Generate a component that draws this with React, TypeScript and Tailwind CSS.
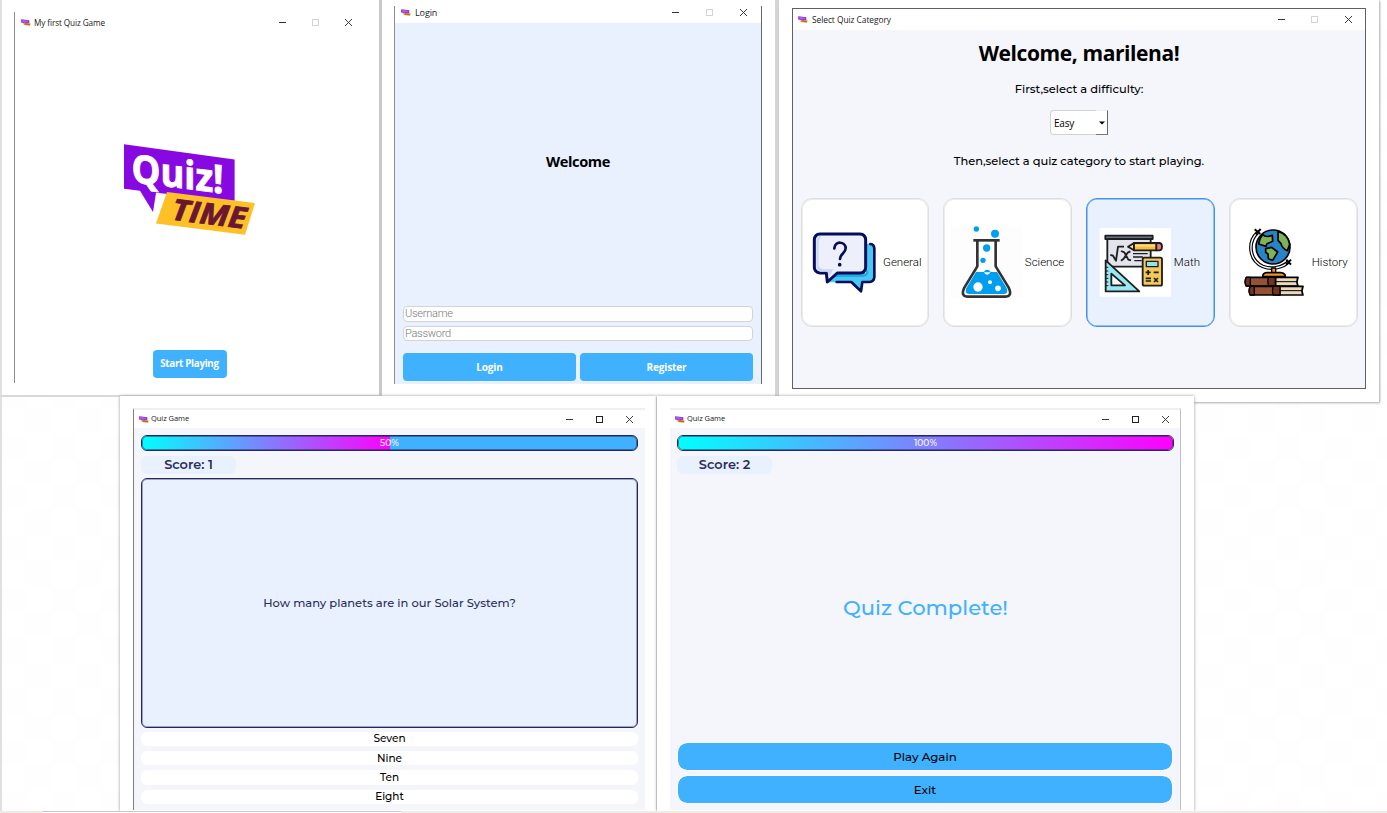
import type { ReactNode } from "react";

const UI = "font-['Open_Sans','Noto_Sans',sans-serif]";
const GEO = "font-['Montserrat',Inter,sans-serif]";

function MiniLogo() {
  return (
    <svg viewBox="122 142 136 96" className="h-[7px] w-[10px] shrink-0">
      <path d="M124 144L235 159V201L156 193L153 212L140 191L124 189Z" fill="#8a20dc" />
      <path d="M136 160L222 172M140 174L222 186" stroke="#d9b3f5" strokeWidth="6" />
      <path d="M167 192L255 203L245 235L156 223Z" fill="#d8922a" />
      <path d="M176 208L240 217" stroke="#8c3a2c" strokeWidth="9" />
    </svg>
  );
}

function Logo() {
  return (
    <svg viewBox="122 142 136 96" className="h-24 w-[136px]">
      <path d="M124 144.3L234.6 159.5V201L156 192.8L153 212L140 190.8L124 188.8Z" fill="#8708e0" />
      <path d="M167 192L255 203L245 234.7L156 223.5Z" fill="#fdc027" />
      <text
        transform="matrix(.92 .115 0 1 131.5 182)"
        fontFamily="Open Sans, Noto Sans, sans-serif"
        fontWeight="700"
        fontSize="39"
        textLength="100"
        lengthAdjust="spacingAndGlyphs"
        fill="#fff"
        stroke="#fff"
        strokeWidth=".9"
      >
        Quiz!
      </text>
      <text
        transform="matrix(1 .125 -.13 1 171 219.5)"
        fontFamily="Open Sans, Noto Sans, sans-serif"
        fontWeight="700"
        fontStyle="italic"
        fontSize="29"
        textLength="74"
        lengthAdjust="spacingAndGlyphs"
        fill="#6b1733"
        stroke="#6b1733"
        strokeWidth=".8"
      >
        TIME
      </text>
    </svg>
  );
}

function Control({ cell, children }: { cell: string; children: ReactNode }) {
  return (
    <span className={`flex justify-center ${cell}`}>
      <svg width="9" height="9" viewBox="0 0 9 9" fill="none">
        {children}
      </svg>
    </span>
  );
}

function TitleBar({
  title,
  height,
  cell,
  text,
  maximizable = false,
}: {
  title: string;
  height: string;
  cell: string;
  text: string;
  maximizable?: boolean;
}) {
  return (
    <div className={`flex shrink-0 items-center bg-white ${height}`}>
      <MiniLogo />
      <span className={`flex-1 whitespace-nowrap text-[#222] ${UI} ${text}`}>{title}</span>
      <Control cell={cell}>
        <path d="M1 4.5H8" stroke="#333" />
      </Control>
      <Control cell={cell}>
        <rect x="1.5" y="1.5" width="6" height="6" stroke={maximizable ? "#222" : "#d4d4d4"} />
      </Control>
      <Control cell={cell}>
        <path d="M1 1L8 8M8 1L1 8" stroke="#333" strokeWidth=".95" />
      </Control>
    </div>
  );
}

function GeneralIcon() {
  return (
    <svg viewBox="54 123 216 216" className="size-[72px] shrink-0" strokeLinejoin="round" strokeLinecap="round">
      <path d="M105 292H183L212 319L216 292H240Q254 291 254 276V190Q253 177 238 176H228V264H140L108 292Z" fill="#45caf2" />
      <path d="M140 266H228V250L236 262Q234 276 215 276H126Z" fill="#26a9e0" />
      <path d="M241 177Q253 178 253 192V276Q252 290 238 291H217L213 319L184 291H140" fill="none" stroke="#070c5c" strokeWidth="8" />
      <path d="M90 147H210Q226 148 227 164V247Q226 263 210 264H142L112 291L109 264H90Q74 262 73 247V164Q74 148 90 147Z" fill="#edf0fa" stroke="#070c5c" strokeWidth="9" />
      <path d="M79 166Q80 153 94 152L86 170V240Q88 252 104 253H130L116 277L113 260H92Q80 259 79 246Z" fill="#cbd9f2" />
      <path d="M133 190C134 166 167 169 167 190C167 205 150 206 150 222" fill="none" stroke="#070c5c" strokeWidth="8" />
      <circle cx="149" cy="239" r="5.5" fill="#070c5c" />
    </svg>
  );
}

function ScienceIcon() {
  return (
    <svg viewBox="480 123 216 216" className="size-[72px] shrink-0">
      <rect x="484" y="128" width="211" height="211" fill="#fdfdfd" />
      <path d="M562 168V244L523 308Q511 333 532 335H647Q668 333 656 308L617 244V168" fill="#fff" stroke="#333" strokeWidth="8" strokeLinejoin="round" />
      <path d="M550 166H629" stroke="#333" strokeWidth="8" />
      <path d="M558 261H582Q591 253 601 261H621L650 309Q657 326 642 327H537Q522 326 529 309Z" fill="#009eef" />
      <g fill="#009eef">
        <circle cx="559" cy="132" r="8" />
        <circle cx="615" cy="146" r="12" />
        <circle cx="590" cy="189" r="11" />
        <circle cx="579" cy="226" r="8" />
        <path d="M582 261A10 10 0 0 1 601 261Z" />
      </g>
      <g fill="#fff">
        <path d="M582 262A10 10 0 0 0 601 262Z" />
        <circle cx="564" cy="306" r="14" />
        <circle cx="600" cy="292" r="6" />
        <circle cx="624" cy="310" r="8.5" />
      </g>
    </svg>
  );
}

function MathIcon() {
  return (
    <svg viewBox="72 123 216 216" className="size-[72px] shrink-0" stroke="#1d1d22" strokeWidth="5.5" strokeLinejoin="round">
      <rect x="74" y="129" width="214" height="206" fill="#fff" stroke="none" />
      <rect x="97" y="161" width="130" height="84" fill="#e3e4ec" />
      <rect x="91" y="152" width="142" height="10" fill="#68748c" />
      <path d="M106 210L114 212L123 227L129 185H147M138 198L148 202L160 224L168 226M166 199L158 203L146 221L138 227" fill="none" />
      <path d="M174 206H218M174 216H204M178 227H200" fill="none" strokeWidth="4" />
      <path d="M159 185L177 174V196Z" fill="#f3d9ad" />
      <path d="M177 174H245V196H177Z" fill="#f5bd42" />
      <path d="M180 182H240" stroke="#ffdc77" strokeWidth="5" />
      <path d="M244 174H254Q261 175 261 185T254 196H244Z" fill="#f4786b" />
      <path d="M92 226L193 319H92Z" fill="#98e9f2" />
      <path d="M109 266L150 301H109Z" fill="#fff" />
      <path d="M93 247H100M93 258H100M93 269H100M93 280H100M93 291H100M93 302H100" strokeWidth="3" />
      <rect x="203" y="218" width="58" height="84" rx="5" fill="#f5c957" />
      <rect x="214" y="229" width="35" height="16" fill="#91e4ee" strokeWidth="4" />
      <path d="M212 262H227M219.500 255V270M236 262H251M212 280H228M212 288H228M237 279L249 291M249 279L237 291" fill="none" strokeWidth="5" />
    </svg>
  );
}

function HistoryIcon() {
  return (
    <svg viewBox="486 123 216 216" className="size-[72px] shrink-0" stroke="#000" strokeWidth="5" strokeLinejoin="round">
      <path d="M548 142C516 172 523 226 563 244C593 256 625 246 641 230" fill="none" stroke="#000" strokeWidth="11" />
      <path d="M548 142C516 172 523 226 563 244C593 256 625 246 641 230" fill="none" stroke="#fff" strokeWidth="4" />
      <path d="M539 133L556 147M557 132L542 148M634 224L648 239M648 224L633 239" fill="none" strokeWidth="6" />
      <circle cx="594" cy="186" r="51" fill="#2883c8" />
      <path d="M563 149Q573 159 592 151L593 169L576 176L573 184L551 177Q553 160 563 149Z" fill="#7db455" />
      <path d="M609 139Q640 148 644 178L637 197Q621 190 618 176L609 166Z" fill="#7db455" />
      <path d="M572 191L590 187L608 201L593 226L580 221L579 207L572 202Z" fill="#7db455" />
      <path d="M590 249H602V265H590Z" fill="#f39a1e" strokeWidth="4" />
      <path d="M563 275Q563 264 575 263H617Q631 264 631 275Z" fill="#f39a1e" />
      <path d="M600 277H669Q663 290 669 303H600Z" fill="#ead9bd" />
      <path d="M514 277H602V303H514Q507 290 514 277Z" fill="#955035" />
      <path d="M602 290H668" strokeWidth="3" />
      <path d="M514 277H526V303H514Q507 290 514 277ZM581 277H601V303H581Q576 290 581 277Z" fill="#70341f" strokeWidth="4" />
      <path d="M612 304H684Q678 317 684 330H612Z" fill="#ead9bd" />
      <path d="M526 304H614V330H526Q519 317 526 304Z" fill="#955035" />
      <path d="M615 317H683" strokeWidth="3" />
      <path d="M526 304H538V330H526Q519 317 526 304ZM595 304H615V330H595Q590 317 595 304Z" fill="#70341f" strokeWidth="4" />
    </svg>
  );
}

const categories = [
  { label: "General", icon: <GeneralIcon />, selected: false, shift: "pr-0" },
  { label: "Science", icon: <ScienceIcon />, selected: false, shift: "pr-px" },
  { label: "Math", icon: <MathIcon />, selected: true, shift: "pr-0.5" },
  { label: "History", icon: <HistoryIcon />, selected: false, shift: "pr-0.5" },
];

function StartWindow() {
  return (
    <section className="absolute left-0 top-0 h-[397px] w-[379px] border-b-2 border-l-2 border-b-[#d8d8d8] border-l-[#e0e0e0] bg-white pl-3 pt-3">
      <div className="flex h-[371px] w-[351px] flex-col border-l border-[#8d8d8d] pl-1.5">
        <TitleBar title="My first Quiz Game" height="h-[21px]" cell="w-[33px]" text="pl-[3px] pt-px text-[8.2px] tracking-[-0.1px]" />
        <div className="flex flex-1 flex-col items-center pr-[7px]">
          <div className="mt-[109px] flex">
            <Logo />
          </div>
          <button className={`mt-[112px] h-7 w-[74px] whitespace-nowrap rounded bg-[#3fb1ff] pt-px text-[9.8px] font-bold tracking-[-0.3px] text-white ${UI}`}>
            Start Playing
          </button>
        </div>
      </div>
    </section>
  );
}

function LoginWindow() {
  return (
    <section className="absolute left-[379px] top-0 h-[396px] w-[400px] border-l-[3px] border-r-4 border-l-[#c8c8c8] border-r-[#d5d5d5] bg-white pl-3 pt-1.5">
      <div className="flex h-[378px] w-[368px] flex-col border-x border-l-[#8d8d8d] border-r-[#666] bg-[#e9f1ff]">
        <div className="bg-white pl-1.5 pr-px">
          <TitleBar title="Login" height="h-[12px] mb-[5px]" cell="w-[34px]" text="pl-1 pt-px text-[9px] tracking-[-0.1px]" />
        </div>
        <div className="flex flex-1 flex-col px-2">
          <h2 className={`mt-[127px] text-center text-[14.6px] font-bold leading-[22px] tracking-[-0.4px] text-black ${UI}`}>Welcome</h2>
          <div className="mt-[134px] flex flex-col gap-1 font-[Roboto,sans-serif] text-[11px] font-light leading-[14px] tracking-[-0.25px] text-[#777]">
            <div className="h-[15.500px] rounded border border-[#d3d3d3] bg-white pl-px">Username</div>
            <div className="h-[15.500px] rounded border border-[#d3d3d3] bg-white pl-px">Password</div>
          </div>
          <div className={`mt-[12px] grid grid-cols-2 gap-1 text-[10px] font-bold tracking-[-0.15px] text-white ${UI}`}>
            <button className="h-[28px] rounded bg-[#3fb1ff]">Login</button>
            <button className="h-[28px] rounded bg-[#3fb1ff]">Register</button>
          </div>
        </div>
      </div>
    </section>
  );
}

function CategoryWindow() {
  return (
    <section className="absolute left-[779px] top-0 h-[402px] w-[600px] bg-white pl-[13px] pt-2 shadow-[1px_1px_2px_#aaa]">
      <div className="flex h-[381px] w-[574px] flex-col border border-[#606064] bg-[#f4f6fc]">
        <div className="bg-white pl-[5px]">
          <TitleBar title="Select Quiz Category" height="h-[21px]" cell="w-[33.5px]" text="pl-1 pt-px text-[8.4px] tracking-[-0.05px]" />
        </div>
        <div className="flex flex-1 flex-col items-center text-black">
          <h1 className={`mt-[8px] text-[21px] font-bold leading-[30px] tracking-[-0.4px] ${UI}`}>Welcome, marilena!</h1>
          <p className={`mt-3 text-[11.450px] font-medium leading-[18px] ${GEO}`}>First,select a difficulty:</p>
          <div className="mt-3 flex h-[25px] w-[58px] justify-between rounded-l bg-white">
            <span className={`flex-1 rounded-l border-y border-l border-[#d0d0d0] pl-[3px] pt-px text-[10px] leading-[23px] tracking-[-0.2px] ${UI}`}>
              Easy
            </span>
            <span className="flex w-3 items-center justify-center border-b border-r border-t border-b-[#777] border-r-[#666] border-t-[#eee]">
              <svg width="6" height="4" viewBox="0 0 6 4">
                <path d="M0 .5H6L3 3.500Z" />
              </svg>
            </span>
          </div>
          <p className={`mt-[17px] text-[11.450px] font-medium leading-[18px] tracking-[-0.02px] ${GEO}`}>
            Then,select a quiz category to start playing.
          </p>
          <div className="mt-[27.500px] grid w-[557px] grid-cols-4 gap-[14.300px]">
            {categories.map((c) => (
              <div
                key={c.label}
                className={`flex h-[129px] items-center justify-center gap-[3px] rounded-[11px] border ${c.shift} ${
                  c.selected
                    ? "border-[#4291ed] bg-[#e9f1ff] shadow-[inset_0_0_0_0.500px_#4291ed]"
                    : "border-[#dedede] bg-white shadow-[inset_0_0_0_1px_#ececec]"
                }`}
              >
                {c.icon}
                <span className="pt-0.5 font-[Roboto,sans-serif] text-[11.5px] font-light">{c.label}</span>
              </div>
            ))}
          </div>
        </div>
      </div>
    </section>
  );
}

function Progress({ value }: { value: number }) {
  return (
    <div className="relative h-4 shrink-0 overflow-hidden rounded-md border border-[#25285a] bg-[#3fb1ff]">
      <div className="h-full bg-linear-to-r/srgb from-[#00ffff] to-[#ff00ff]" style={{ width: `${value}%` }} />
      <span
        className={`absolute inset-0 rounded-[5px] text-center text-[9px] font-medium leading-[13px] text-white shadow-[inset_0_0_0_1px_#25285a80] ${GEO}`}
      >
        {value}%
      </span>
    </div>
  );
}

function Score({ value }: { value: number }) {
  return (
    <div className={`mt-[5px] h-[18px] w-[95px] shrink-0 rounded-md bg-[#e9f1ff] text-center text-[12.900px] font-semibold leading-[18px] text-[#2b2e5c] ${GEO}`}>
      Score: {value}
    </div>
  );
}

function QuestionWindow() {
  return (
    <section className="absolute left-[120px] top-[396px] h-[415px] w-[536px] bg-white pl-[13px] pt-3 shadow-[0_0_3px_#999]">
      <div className="flex h-[402px] w-[512px] flex-col border-l border-t-2 border-l-[#808080] border-t-[#efefef] bg-[#f4f6fc]">
        <div className="bg-white pl-[5px] pr-px">
          <TitleBar title="Quiz Game" height="h-[18px]" cell="w-[30px]" text="pl-0.5 text-[7.500px] tracking-[-0.05px]" maximizable />
        </div>
        <div className="flex flex-1 flex-col px-[7px] pt-[7px]">
          <Progress value={50} />
          <Score value={1} />
          <div
            className={`mt-1 flex h-[250px] items-center justify-center rounded-md border border-[#25285a] bg-[#e9f1ff] pt-0.5 text-[11.500px] font-medium text-[#2b2e5c] shadow-[inset_0_0_0_1px_#9fa5c4] ${GEO}`}
          >
            How many planets are in our Solar System?
          </div>
          <div className={`mt-1 flex flex-col gap-[5px] text-center text-[10.500px] font-medium leading-[14px] text-black ${GEO}`}>
            {["Seven", "Nine", "Ten", "Eight"].map((answer) => (
              <button key={answer} className="h-[14.200px] rounded-md bg-white pt-[0.400px]">
                {answer}
              </button>
            ))}
          </div>
        </div>
      </div>
    </section>
  );
}

function CompleteWindow() {
  return (
    <section className="absolute left-[657px] top-[396px] h-[415px] w-[537px] bg-white pl-[13px] pt-3 shadow-[0_0_3px_#999]">
      <div className="flex h-[402px] w-[511px] flex-col border-r border-t-2 border-r-[#c0c0c4] border-t-[#efefef] bg-[#f4f6fc]">
        <div className="bg-white pl-[5px]">
          <TitleBar title="Quiz Game" height="h-[18px]" cell="w-[30px]" text="pl-0.5 text-[7.500px] tracking-[-0.05px]" maximizable />
        </div>
        <div className="flex flex-1 flex-col pl-[7px] pr-[6px] pt-[7px]">
          <Progress value={100} />
          <Score value={2} />
          <h2 className={`mt-[119px] text-center text-[21.100px] font-medium leading-[30px] text-[#3fb1ff] ${GEO}`}>Quiz Complete!</h2>
          <div className={`mr-px mt-[119px] flex flex-col gap-1 text-[11.800px] font-medium text-black ${GEO}`}>
            <button className="h-[29px] rounded-[10px] border border-[#fbfdff] bg-[#3fb1ff] bg-clip-padding pt-0.5">Play Again</button>
            <button className="h-[29px] rounded-[10px] border border-[#fbfdff] bg-[#3fb1ff] bg-clip-padding pt-0.5">Exit</button>
          </div>
        </div>
      </div>
    </section>
  );
}

export default function App() {
  return (
    <main className="relative h-[813px] w-[1387px] overflow-hidden bg-[repeating-conic-gradient(#fefefe_0_25%,#fff_0_50%)] bg-[length:51px_51px]">
      <div className="h-full border-l-2 border-[#e0e0e0]" />
      <StartWindow />
      <LoginWindow />
      <CategoryWindow />
      <QuestionWindow />
      <CompleteWindow />
      <div className="absolute inset-x-0 bottom-0 flex h-0.5 bg-[#efebe6]">
        <div className="ml-[42px] w-[359px] border-t border-[#c8c8c8] bg-white" />
      </div>
    </main>
  );
}
